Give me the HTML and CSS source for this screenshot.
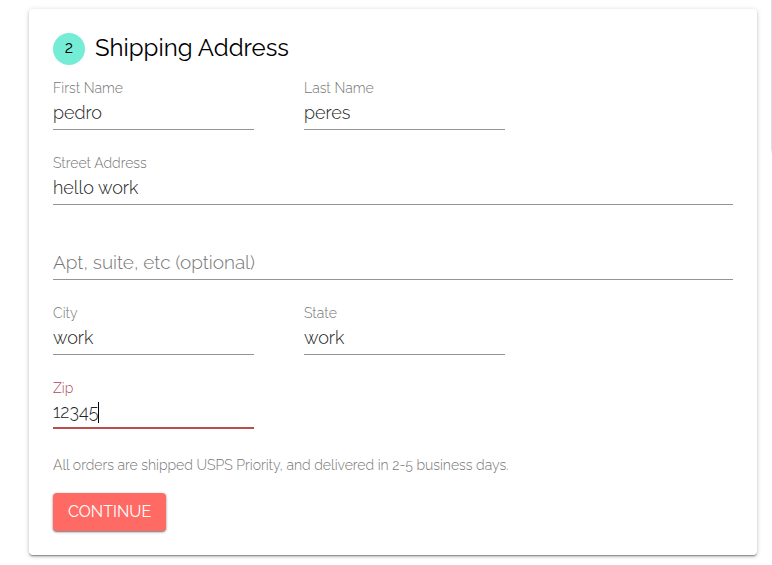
FILE: index.html
```html
<!DOCTYPE html>
<html lang="en">
<head>
<meta charset="utf-8">
<meta name="viewport" content="width=device-width, initial-scale=1">
<title>Shipping Address</title>
<link rel="stylesheet" href="styles.css">
</head>
<body>
<main class="checkout">
  <form class="card">
    <h2 class="title"><span class="step">2</span>Shipping Address</h2>
    <div class="fields">
      <div class="field">
        <label for="first">First Name</label>
        <input id="first" type="text" value="pedro">
      </div>
      <div class="field">
        <label for="last">Last Name</label>
        <input id="last" type="text" value="peres">
      </div>
      <div class="field wide">
        <label for="street">Street Address</label>
        <input id="street" type="text" value="hello work">
      </div>
      <div class="field wide unlabelled">
        <input id="apt" type="text" placeholder="Apt, suite, etc (optional)" aria-label="Apt, suite, etc (optional)">
      </div>
      <div class="field">
        <label for="city">City</label>
        <input id="city" type="text" value="work">
      </div>
      <div class="field">
        <label for="state">State</label>
        <input id="state" type="text" value="work">
      </div>
      <div class="field active">
        <label for="zip">Zip</label>
        <div class="entry"><input id="zip" type="text" value="12345"><span class="caret"></span></div>
      </div>
    </div>
    <p class="note">All orders are shipped USPS Priority, and delivered in 2-5 business days.</p>
    <button class="continue" type="button">CONTINUE</button>
  </form>
  <aside class="edge"></aside>
</main>
</body>
</html>
```
FILE: styles.css
```css
* { box-sizing: border-box; }

body {
  margin: 0;
  background: #fff;
  font-family: Raleway, Lato, sans-serif;
  font-weight: 300;
}

.checkout {
  display: flex;
  align-items: flex-start;
  gap: 14px;
  padding: 9px 0 10px 29px;
  overflow: hidden;
}

.card {
  flex: 1;
  padding: 24px;
  border-radius: 4px;
  background: #fff;
  box-shadow: 0 1px 5px rgba(0, 0, 0, .2), 0 2px 2px rgba(0, 0, 0, .14), 0 3px 1px -2px rgba(0, 0, 0, .12), 0 1px 0 rgba(0, 0, 0, .15);
}

.edge {
  flex: none;
  width: 1px;
  height: 155px;
  margin-top: -9px;
  background: linear-gradient(#dcdcdc 148px, #fff);
}

.title {
  display: flex;
  align-items: flex-start;
  gap: 10px;
  margin: 0 0 14px;
  font-size: 24px;
  font-weight: 400;
  line-height: 30px;
  color: #000;
}

.step {
  width: 32px;
  height: 32px;
  border-radius: 50%;
  background: #75edd6;
  font-size: 16px;
  text-align: center;
}

.fields {
  display: grid;
  grid-template-columns: 201fr 201fr 178fr;
  gap: 24px 50px;
}

.field {
  display: flex;
  flex-direction: column;
}

.wide { grid-column: 1 / -1; }

.unlabelled { padding-top: 18px; }

.field label {
  font-size: 14px;
  line-height: 18px;
  color: #757575;
}

.field input {
  width: 100%;
  height: 33px;
  padding: 0 0 1px;
  border: 0;
  border-bottom: 1px solid #949494;
  border-radius: 0;
  outline: 0;
  background: transparent;
  font: inherit;
  font-size: 18px;
  color: #222;
}

.field input::placeholder {
  font-size: 19px;
  color: #757575;
  opacity: 1;
}

.active { grid-column: 1; }

.active label { color: #b5485f; }

.entry {
  display: flex;
  align-items: center;
  height: 32px;
  border-bottom: 2px solid #b94e4e;
}

.entry input {
  width: auto;
  field-sizing: content;
  height: 30px;
  border: 0;
}

.caret {
  width: 1px;
  height: 21px;
  background: #000;
}

.note {
  margin: 27px 0 19px;
  font-size: 14px;
  line-height: 18px;
  color: #757575;
}

.continue {
  display: block;
  height: 38px;
  padding: 0 15px 2px;
  border: 0;
  border-radius: 4px;
  background: #ff6b64;
  box-shadow: 0 1px 3px rgba(0, 0, 0, .4), 0 1px 1px rgba(0, 0, 0, .25);
  font-family: Raleway, Lato, sans-serif;
  font-size: 16px;
  font-weight: 400;
  color: #fff;
}
```
